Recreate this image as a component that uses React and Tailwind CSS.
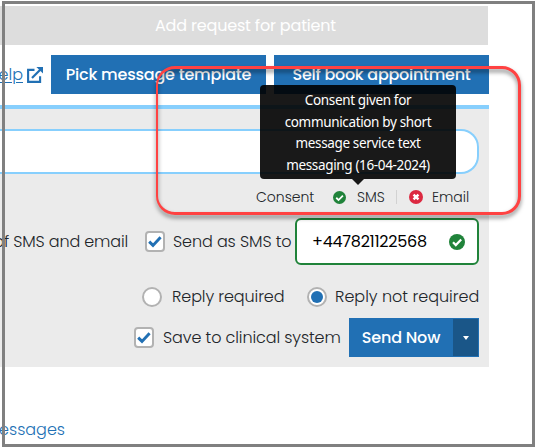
import React, { useState } from "react";

function CheckIcon({ className }) {
  return (
    <svg viewBox="0 0 16 16" className={className}>
      <circle cx="8" cy="8" r="8" fill="#20833a" />
      <path d="M4 8.3l2.8 2.8 5.4-5.5" fill="none" stroke="#fff" strokeWidth="2.2" />
    </svg>
  );
}

function CrossIcon({ className }) {
  return (
    <svg viewBox="0 0 16 16" className={className}>
      <circle cx="8" cy="8" r="8" fill="#dc2941" />
      <path d="M5.2 5.2l5.6 5.6M10.8 5.2l-5.6 5.6" fill="none" stroke="#fff" strokeWidth="2.8" />
    </svg>
  );
}

function ExternalLinkIcon() {
  return (
    <svg viewBox="0 0 16 16" className="ml-[4px] h-[16px] w-[16px] shrink-0" fill="none" stroke="#2170b4">
      <path d="M7.5 2.9H1.1v12h12V9.2" strokeWidth="2.1" />
      <path d="M5 11L13.2 2.8" strokeWidth="2.2" />
      <path d="M9.4 0H16v6.6z" fill="#2170b4" stroke="none" />
    </svg>
  );
}

function Checkbox({ checked, onChange }) {
  return (
    <button
      onClick={onChange}
      className="flex h-[21px] w-[20px] shrink-0 items-center justify-center rounded-[4px] border-2 border-[#b2b2b2] bg-white"
    >
      {checked && (
        <svg viewBox="0 0 14 13" className="h-[13px] w-[14px] shrink-0">
          <path d="M1.2 6.6L5 10.4 12.6 2.2" fill="none" stroke="#2170b4" strokeWidth="2.9" />
        </svg>
      )}
    </button>
  );
}

function Radio({ checked, onChange }) {
  return (
    <button
      onClick={onChange}
      className="flex h-[20px] w-[20px] shrink-0 items-center justify-center rounded-full border-2 border-[#b2b2b2] bg-white"
    >
      {checked && <span className="h-[12px] w-[12px] rounded-full bg-[#2170b4]" />}
    </button>
  );
}

export default function App() {
  const [sendSms, setSendSms] = useState(true);
  const [save, setSave] = useState(true);
  const [reply, setReply] = useState(false);

  return (
    <div className="relative h-[447px] w-[535px] overflow-hidden bg-white font-['Poppins','Inter',sans-serif] text-[16px] font-light whitespace-nowrap text-[#212529]">
      <div className="flex w-[489px] flex-col pt-[6px]">
        <div className="flex h-[39px] w-[488px] items-center bg-[#ddd] pl-[155px] font-normal tracking-[-0.18px] text-white">
          Add request for patient
        </div>

        <div className="mt-[10px] flex h-[39px] items-center justify-end">
          <a className="text-[#2170b4] underline underline-offset-2">elp</a>
          <ExternalLinkIcon />
          <button className="ml-[8px] h-[39px] w-[215px] shrink-0 bg-[#2170b4] font-medium tracking-[-0.21px] text-white">
            Pick message template
          </button>
          <button className="ml-[8px] h-[39px] w-[215px] shrink-0 bg-[#2170b4] font-medium tracking-[-0.27px] text-white">
            Self book appointment
          </button>
        </div>

        <div className="mt-[11px] flex h-[262px] flex-col border-t-4 border-[#87cffd] bg-[#ebebeb] pr-[10px]">
          <div className="mt-[20px] h-[45px] shrink-0 rounded-r-[18px] border-2 border-l-0 border-[#87cffd] bg-white" />

          <div className="mt-[13px] flex h-[20px] shrink-0 items-center justify-end pr-[10px] text-[14px]">
            <span className="w-[77px]">Consent</span>
            <CheckIcon className="h-[13px] w-[13px]" />
            <span className="ml-[11px] w-[39px]">SMS</span>
            <span className="h-[14px] w-px bg-[#d2d2d2]" />
            <CrossIcon className="ml-[12px] h-[14px] w-[14px]" />
            <span className="ml-[9px] w-[37px]">Email</span>
          </div>

          <div className="mt-[11px] flex h-[47px] shrink-0 items-center justify-end">
            <span className="mr-[17px] tracking-[-0.15px]">of SMS and email</span>
            <Checkbox checked={sendSms} onChange={() => setSendSms(!sendSms)} />
            <span className="ml-[8px] w-[122px] shrink-0 tracking-[-0.1px]">Send as SMS to</span>
            <div className="flex h-[47px] w-[184px] shrink-0 items-center rounded-[6px] border-2 border-[#20833a] bg-white pl-[15px]">
              <span className="w-[137px] font-normal tracking-[-0.25px] text-black">+447821122568</span>
              <CheckIcon className="h-[16px] w-[16px]" />
            </div>
          </div>

          <div className="mt-[22px] flex h-[20px] shrink-0 items-center justify-end">
            <Radio checked={reply} onChange={() => setReply(true)} />
            <span className="ml-[10px] w-[135px] tracking-[-0.1px]">Reply required</span>
            <Radio checked={!reply} onChange={() => setReply(false)} />
            <span className="ml-[8px] w-[144px]">Reply not required</span>
          </div>

          <div className="mt-[11px] flex h-[39px] shrink-0 items-center justify-end">
            <Checkbox checked={save} onChange={() => setSave(!save)} />
            <span className="ml-[9px] w-[186px] tracking-[-0.1px]">Save to clinical system</span>
            <div className="flex h-[39px] w-[130px] shrink-0 bg-[#2170b4] py-px pr-px font-medium text-white">
              <button className="w-[104px] tracking-[-0.2px]">Send Now</button>
              <button className="flex w-[25px] items-center justify-center bg-[#1a5688]">
                <span className="border-x-[3px] border-t-4 border-x-transparent border-t-white" />
              </button>
            </div>
          </div>
        </div>

        <a className="mt-[51px] flex h-[24px] w-[65px] justify-end text-[#2170b4]">essages</a>
      </div>

      <div className="absolute top-[85px] left-[260px] w-[196px] rounded-[4px] bg-black/90 pt-[5px] pb-[3px] text-center font-['Noto_Sans',sans-serif] text-[13.5px] leading-[21.5px] font-normal tracking-[-0.35px] text-white">
        <div>Consent given for</div>
        <div>communication by short</div>
        <div>message service text</div>
        <div>messaging (16-04-2024)</div>
        <span className="absolute top-full left-[92px] border-x-[6px] border-t-[6px] border-x-transparent border-t-black/90" />
      </div>

      {/* highlight around the consent block */}
      <div className="pointer-events-none absolute top-[66px] left-[156px] h-[149px] w-[365px] rounded-[19px] border-[3px] border-l-2 border-[#ff4242] drop-shadow-[0_3px_2px_rgba(0,0,0,0.5)]" />
      <div className="pointer-events-none absolute top-px left-[2px] h-[446px] w-[533px] border-[3px] border-[#808080]" />
    </div>
  );
}
